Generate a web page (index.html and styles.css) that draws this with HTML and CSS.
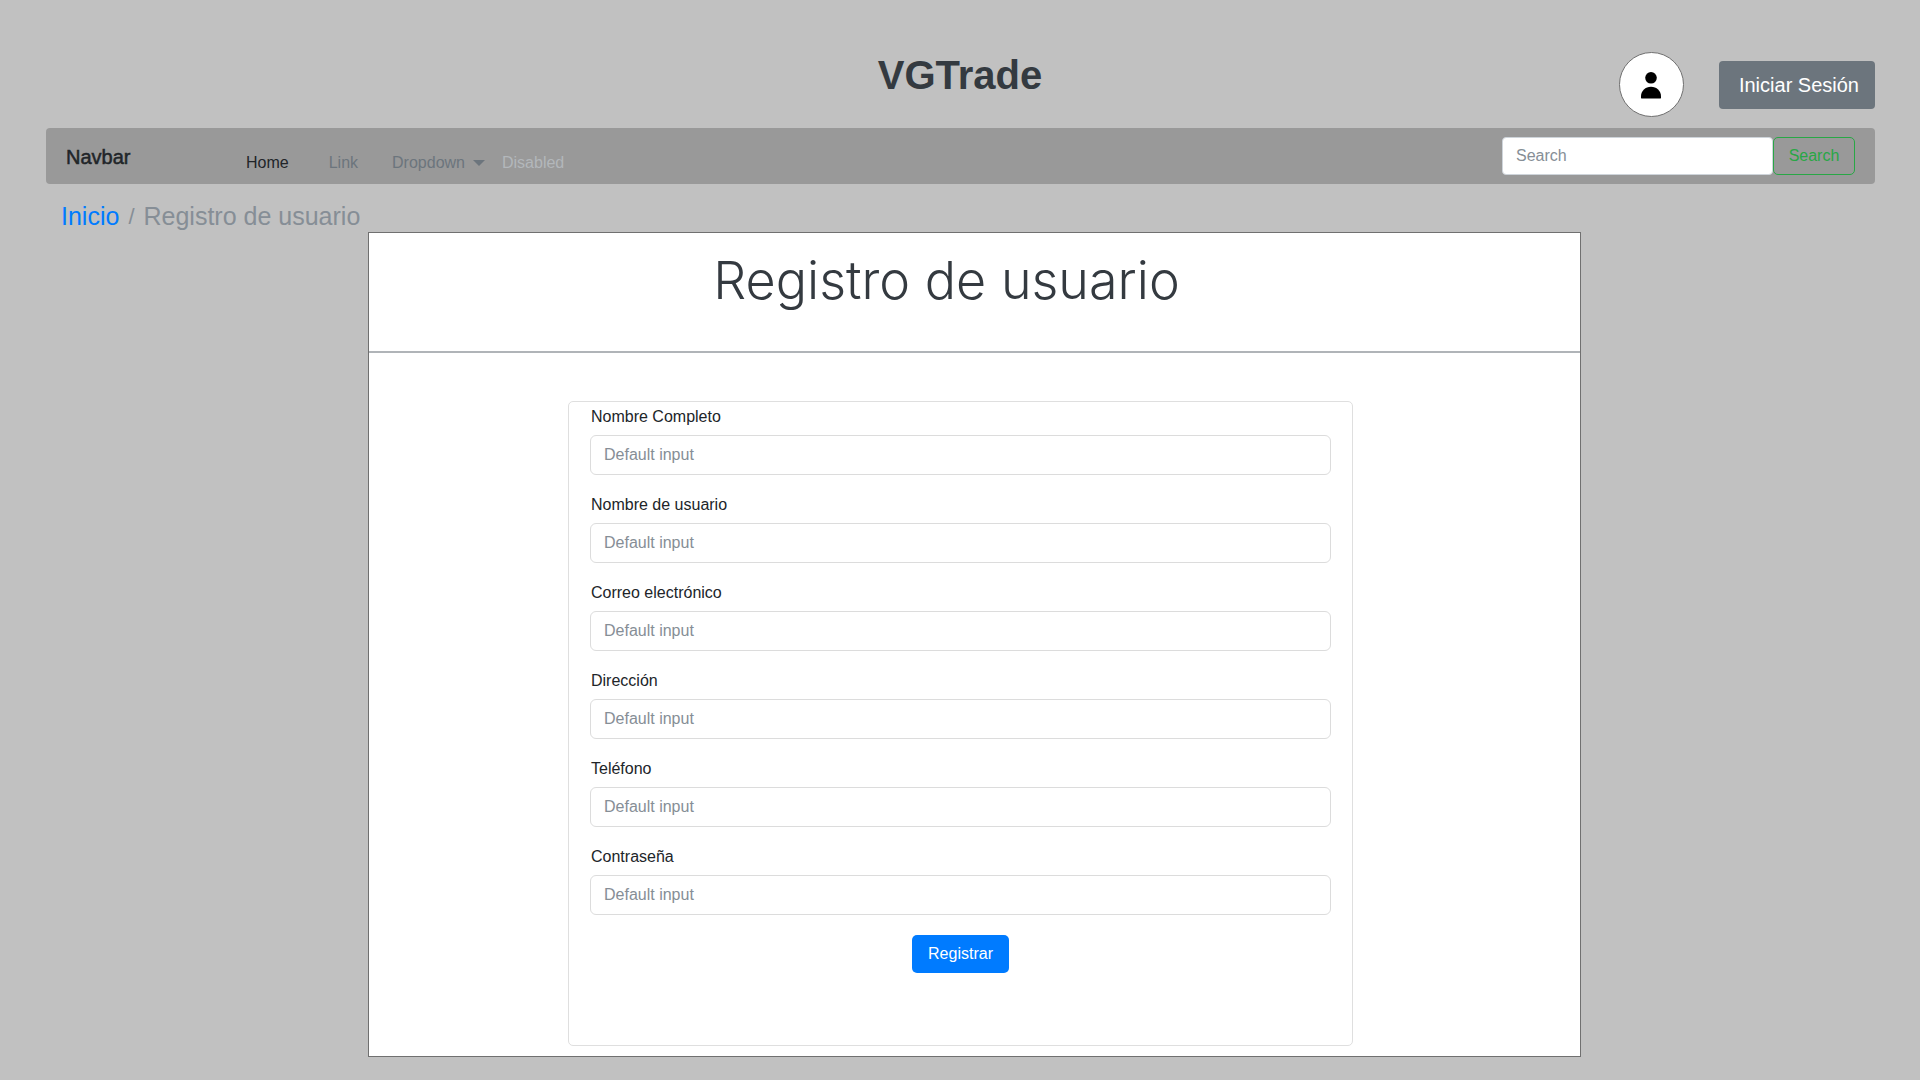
FILE: index.html
```html
<!DOCTYPE html>
<html lang="es">
<head>
  <meta charset="utf-8">
  <meta name="viewport" content="width=device-width, initial-scale=1">
  <title>VGTrade</title>
  <link rel="stylesheet" href="styles.css">
</head>
<body>
  <header class="masthead">
    <h1 class="brand-title">VGTrade</h1>
    <div class="account">
      <span class="avatar">
        <svg class="avatar-icon" viewBox="0 0 20 28" aria-hidden="true">
          <circle cx="10" cy="6.8" r="5.8"/>
          <path d="M10 15.7C15.6 15.7 20 19.9 20 25.2V26.4Q20 27.6 18.8 27.6H1.2Q0 27.6 0 26.4V25.2C0 19.9 4.4 15.7 10 15.7Z"/>
        </svg>
      </span>
      <button class="login-button" type="button">Iniciar Sesión</button>
    </div>
  </header>

  <nav class="navbar">
    <a class="navbar-brand" href="#">Navbar</a>
    <div class="navbar-links">
      <a class="nav-link nav-link-active" href="#">Home</a>
      <a class="nav-link" href="#">Link</a>
      <button class="nav-link nav-dropdown" type="button">Dropdown</button>
      <a class="nav-link nav-link-disabled" href="#" aria-disabled="true">Disabled</a>
    </div>
    <form class="search">
      <input class="search-input" type="search" placeholder="Search" aria-label="Search">
      <button class="search-button" type="button">Search</button>
    </form>
  </nav>

  <nav class="breadcrumb" aria-label="Ruta">
    <a class="breadcrumb-link" href="#">Inicio</a>
    <span class="breadcrumb-separator">/</span>
    <span>Registro de usuario</span>
  </nav>

  <main class="content">
    <section class="panel">
      <h2 class="panel-title">Registro de usuario</h2>
      <div class="panel-body">
        <form class="card">
          <div class="field">
            <label for="nombre">Nombre Completo</label>
            <input id="nombre" type="text" placeholder="Default input">
          </div>
          <div class="field">
            <label for="usuario">Nombre de usuario</label>
            <input id="usuario" type="text" placeholder="Default input">
          </div>
          <div class="field">
            <label for="correo">Correo electrónico</label>
            <input id="correo" type="email" placeholder="Default input">
          </div>
          <div class="field">
            <label for="direccion">Dirección</label>
            <input id="direccion" type="text" placeholder="Default input">
          </div>
          <div class="field">
            <label for="telefono">Teléfono</label>
            <input id="telefono" type="tel" placeholder="Default input">
          </div>
          <div class="field">
            <label for="contrasena">Contraseña</label>
            <input id="contrasena" type="password" placeholder="Default input">
          </div>
          <button class="submit-button" type="submit">Registrar</button>
        </form>
      </div>
    </section>
  </main>
</body>
</html>
```
FILE: styles.css
```css
* {
  box-sizing: border-box;
}

body {
  margin: 0;
  background: #c1c1c1;
  color: #212529;
  font-family: "Liberation Sans", Arial, sans-serif;
  font-size: 16px;
  line-height: 24px;
}

a {
  color: inherit;
  text-decoration: none;
}

button,
input {
  margin: 0;
  font: inherit;
}

input::placeholder {
  color: #868e96;
  opacity: 1;
}

.masthead {
  display: grid;
  grid-template-columns: 1fr auto 1fr;
  align-items: start;
  padding: 52px 45px 11px;
}

.brand-title {
  grid-column: 2;
  margin: 0;
  color: #343a40;
  font-size: 40px;
  line-height: 46px;
}

.account {
  display: flex;
  align-items: center;
  justify-content: flex-end;
  gap: 35px;
}

.avatar {
  display: flex;
  align-items: center;
  justify-content: center;
  width: 65px;
  height: 65px;
  border: 1px solid #707070;
  border-radius: 50%;
  background: #fff;
}

.avatar-icon {
  width: 20px;
  height: 28px;
  fill: #000;
}

.login-button {
  height: 48px;
  padding: 0 16px 0 20px;
  border: 0;
  border-radius: 4px;
  background: #6c757d;
  color: #fff;
  font-size: 20px;
}

.navbar {
  display: flex;
  align-items: center;
  height: 56px;
  margin: 0 45px 0 46px;
  padding: 0 20px;
  border-radius: 4px;
  background: #999;
}

.navbar-brand {
  width: 180px;
  padding-top: 2px;
  font-size: 20px;
  -webkit-text-stroke: 0.5px currentColor;
}

.navbar-links {
  display: flex;
  flex: 1;
  padding-top: 14px;
}

.nav-link {
  margin-right: 40px;
  color: #6c757d;
}

.nav-link-active {
  color: #212529;
}

.nav-dropdown {
  display: flex;
  align-items: center;
  gap: 8px;
  margin-right: 17px;
  margin-left: -6px;
  padding: 0;
  border: 0;
  background: none;
}

.nav-dropdown::after {
  border-top: 6px solid;
  border-right: 6px solid transparent;
  border-left: 6px solid transparent;
  content: "";
}

.nav-link-disabled {
  color: #b3b7bb;
}

.search {
  display: flex;
}

.search-input {
  width: 271px;
  height: 38px;
  padding: 0 13px;
  border: 1px solid #ced4da;
  border-radius: 4px;
  background: #fff;
}

.search-button {
  width: 82px;
  height: 38px;
  padding: 0;
  border: 1px solid #28a745;
  border-radius: 5px;
  background: none;
  color: #28a745;
}

.breadcrumb {
  display: flex;
  gap: 9px;
  padding: 17px 61px 0;
  color: #868e96;
  font-size: 25px;
  line-height: 31px;
}

.breadcrumb-link {
  color: #007bff;
}

.breadcrumb-separator {
  font-size: 22px;
}

.content {
  display: grid;
  grid-template-columns: 368fr 1213fr 339fr;
  padding-bottom: 23px;
}

.panel {
  grid-column: 2;
  border: 1px solid #707070;
  background: #fff;
}

.panel-title {
  margin: 0;
  padding: 16px 56px 38px 0;
  border-bottom: 2px solid #b0b4b8;
  color: #343a40;
  font-family: Inter, "Liberation Sans", sans-serif;
  font-size: 52px;
  font-weight: 300;
  line-height: 64px;
  text-align: center;
}

.panel-body {
  display: grid;
  grid-template-columns: 199fr 785fr 227fr;
  padding: 48px 0 10px;
}

.card {
  display: flex;
  grid-column: 2;
  flex-direction: column;
  gap: 16px;
  padding: 3px 21px 72px;
  border: 1px solid #dfdfdf;
  border-radius: 5px;
}

.field {
  display: flex;
  flex-direction: column;
  gap: 6px;
  padding-bottom: 2px;
}

.field label {
  padding-left: 1px;
}

.field input {
  width: 100%;
  height: 40px;
  padding: 0 13px;
  border: 1px solid #dcdcdc;
  border-radius: 6px;
  background: #fff;
}

.submit-button {
  align-self: center;
  height: 38px;
  margin-top: 2px;
  padding: 0 16px;
  border: 0;
  border-radius: 5px;
  background: #007bff;
  color: #fff;
}
```
